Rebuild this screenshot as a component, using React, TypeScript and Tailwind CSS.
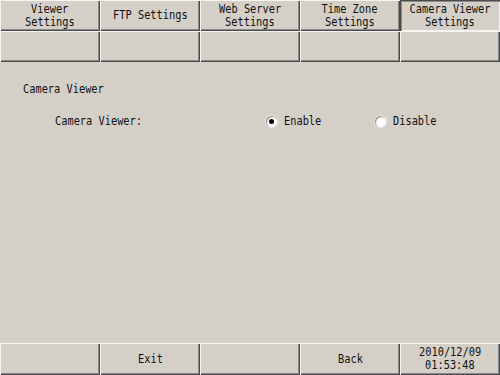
import React from "react";

const raised =
  "shadow-[inset_1px_1px_0_#f6f4f0,inset_-1px_-1px_0_#4a4a4a,inset_-2px_-2px_0_#8c8a86]";
const pressed =
  "shadow-[inset_1px_1px_0_#4a4a4a,inset_2px_2px_0_#8c8a86,inset_-1px_-1px_0_#f6f4f0]";

function Label({ lines, left }: { lines: string[]; left?: boolean }) {
  return (
    <div className={`flex flex-col ${left ? "items-start" : "items-center"} leading-[13px]`}>
      {lines.map((l) => (
        <span
          key={l}
          className={`inline-block h-[13px] whitespace-nowrap scale-x-[0.86] ${left ? "origin-left" : "origin-center"}`}
        >
          {l}
        </span>
      ))}
    </div>
  );
}

function Cell({ lines, active }: { lines?: string[]; active?: boolean }) {
  return (
    <div
      className={`w-[100px] h-full flex items-center justify-center ${active ? pressed : raised}`}
    >
      {lines && <Label lines={lines} />}
    </div>
  );
}

function Radio({ checked }: { checked?: boolean }) {
  return (
    <div className="w-[11px] h-[11px] rounded-full bg-white shadow-[inset_1px_1px_1px_#8a8884,0_0_0_1px_#e8e6e2] flex items-center justify-center">
      {checked && <div className="w-[5px] h-[5px] rounded-full bg-black" />}
    </div>
  );
}

const tabs = [
  ["Viewer", "Settings"],
  ["FTP Settings"],
  ["Web Server", "Settings"],
  ["Time Zone", "Settings"],
  ["Camera Viewer", "Settings"],
];

export default function App() {
  return (
    <div className="w-[500px] h-[375px] bg-[#d4d0c8] text-[#111] text-[12px] font-['DejaVu_Sans_Mono',monospace] flex flex-col overflow-hidden">
      <div className="flex h-[31px]">
        {tabs.map((t, i) => (
          <Cell key={i} lines={t} active={i === 4} />
        ))}
      </div>
      <div className="flex h-[31px]">
        {tabs.map((_, i) => (
          <Cell key={i} />
        ))}
      </div>

      <div className="flex-1 pt-[21px] pl-[23px]">
        <Label lines={["Camera Viewer"]} left />
        <div className="flex items-center mt-[19px] ml-[32px]">
          <div className="w-[211px]">
            <Label lines={["Camera Viewer:"]} left />
          </div>
          <div className="w-[109px] flex items-center gap-[7px]">
            <Radio checked />
            <Label lines={["Enable"]} left />
          </div>
          <div className="flex items-center gap-[7px]">
            <Radio />
            <Label lines={["Disable"]} left />
          </div>
        </div>
      </div>

      <div className="flex h-[32px]">
        <Cell />
        <Cell lines={["Exit"]} />
        <Cell />
        <Cell lines={["Back"]} />
        <Cell lines={["2010/12/09", "01:53:48"]} />
      </div>
    </div>
  );
}
